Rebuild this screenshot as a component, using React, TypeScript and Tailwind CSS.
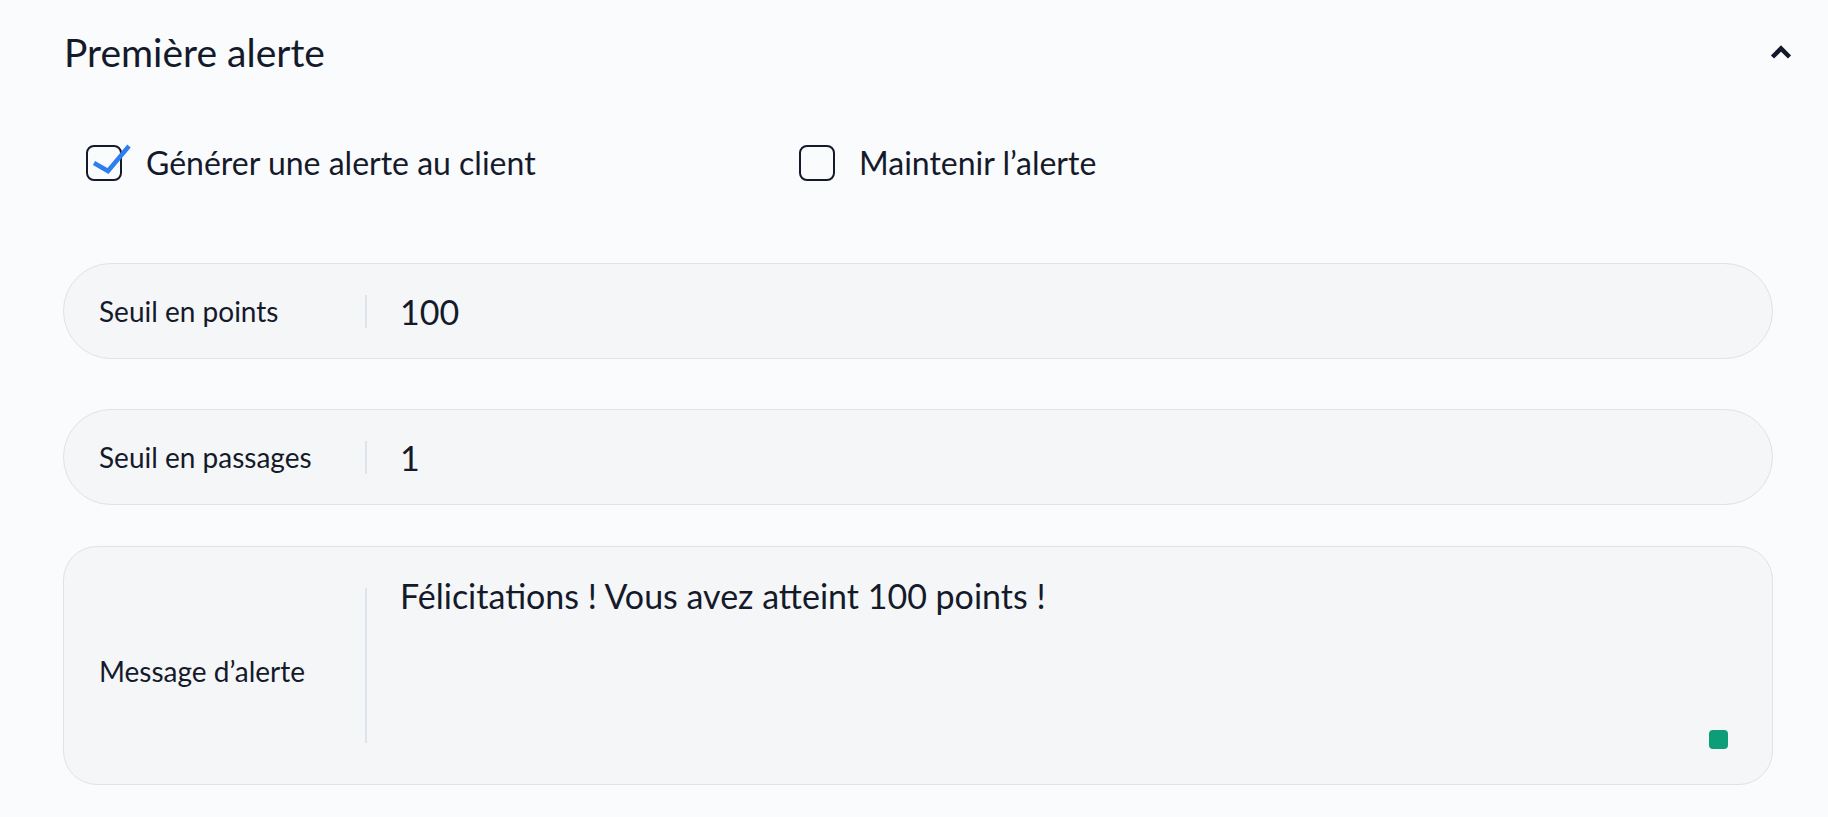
import { useState } from "react";

function CheckBox({ checked }: { checked: boolean }) {
  return (
    <svg width="36" height="36" viewBox="0 0 36 36" className="overflow-visible shrink-0">
      <rect x="1" y="1" width="34" height="34" rx="7" fill="none" stroke="#141a2b" strokeWidth="2" />
      {checked && (
        <path d="M8 18 L22 26 L43 1" fill="none" stroke="#2d7ff0" strokeWidth="4.5" strokeLinecap="butt" strokeLinejoin="miter" />
      )}
    </svg>
  );
}

function Field({ label, value }: { label: string; value: string }) {
  return (
    <div className="flex h-[96px] items-center rounded-full border border-[#dde3ea] bg-[#f4f6f8]">
      <div className="w-[301px] pl-[35px] text-[28px] text-[#151a2b]">{label}</div>
      <div className="h-[33px] w-[2px] bg-[#dde4ea]" />
      <div className="pl-[33px] text-[34px] text-[#151a2b]">{value}</div>
    </div>
  );
}

export default function App() {
  const [generate, setGenerate] = useState(true);
  const [keep, setKeep] = useState(false);

  return (
    <div className="min-h-screen bg-[#fafbfd] font-['Lato','Noto_Sans',sans-serif] text-[#151a2b]">
      <div className="flex h-[104px] items-center justify-between pl-[64px] pr-[36px]">
        <h2 className="text-[39px] font-normal">Première alerte</h2>
        <svg width="22" height="14" viewBox="0 0 22 14" fill="none">
          <path d="M2.5 12 L11 3.5 L19.5 12" stroke="#141a2b" strokeWidth="4.5" />
        </svg>
      </div>

      <div className="flex h-[118px] items-center pl-[86px]">
        <label className="flex w-[713px] cursor-pointer items-center gap-[24px]" onClick={() => setGenerate(!generate)}>
          <CheckBox checked={generate} />
          <span className="text-[32px]">Générer une alerte au client</span>
        </label>
        <label className="flex cursor-pointer items-center gap-[24px]" onClick={() => setKeep(!keep)}>
          <CheckBox checked={keep} />
          <span className="text-[32px]">Maintenir l’alerte</span>
        </label>
      </div>

      <div className="ml-[63px] mr-[55px] mt-[41px] flex flex-col">
        <Field label="Seuil en points" value="100" />
        <div className="mt-[50px]">
          <Field label="Seuil en passages" value="1" />
        </div>
        <div className="relative mt-[41px] flex h-[239px] items-stretch rounded-[34px] border border-[#dde3ea] bg-[#f4f6f8] py-[41px]">
          <div className="flex w-[301px] items-center pl-[35px] pt-[10px] text-[28px]">Message d’alerte</div>
          <div className="w-[2px] bg-[#dde4ea]" />
          <div className="-mt-[14px] flex-1 pl-[33px] text-[34px] leading-[1.3]">
            Félicitations ! Vous avez atteint 100 points !
          </div>
          <div className="absolute bottom-[35px] right-[44px] h-[19px] w-[19px] rounded-[4px] bg-[#0d9e77]" />
        </div>
      </div>
    </div>
  );
}
